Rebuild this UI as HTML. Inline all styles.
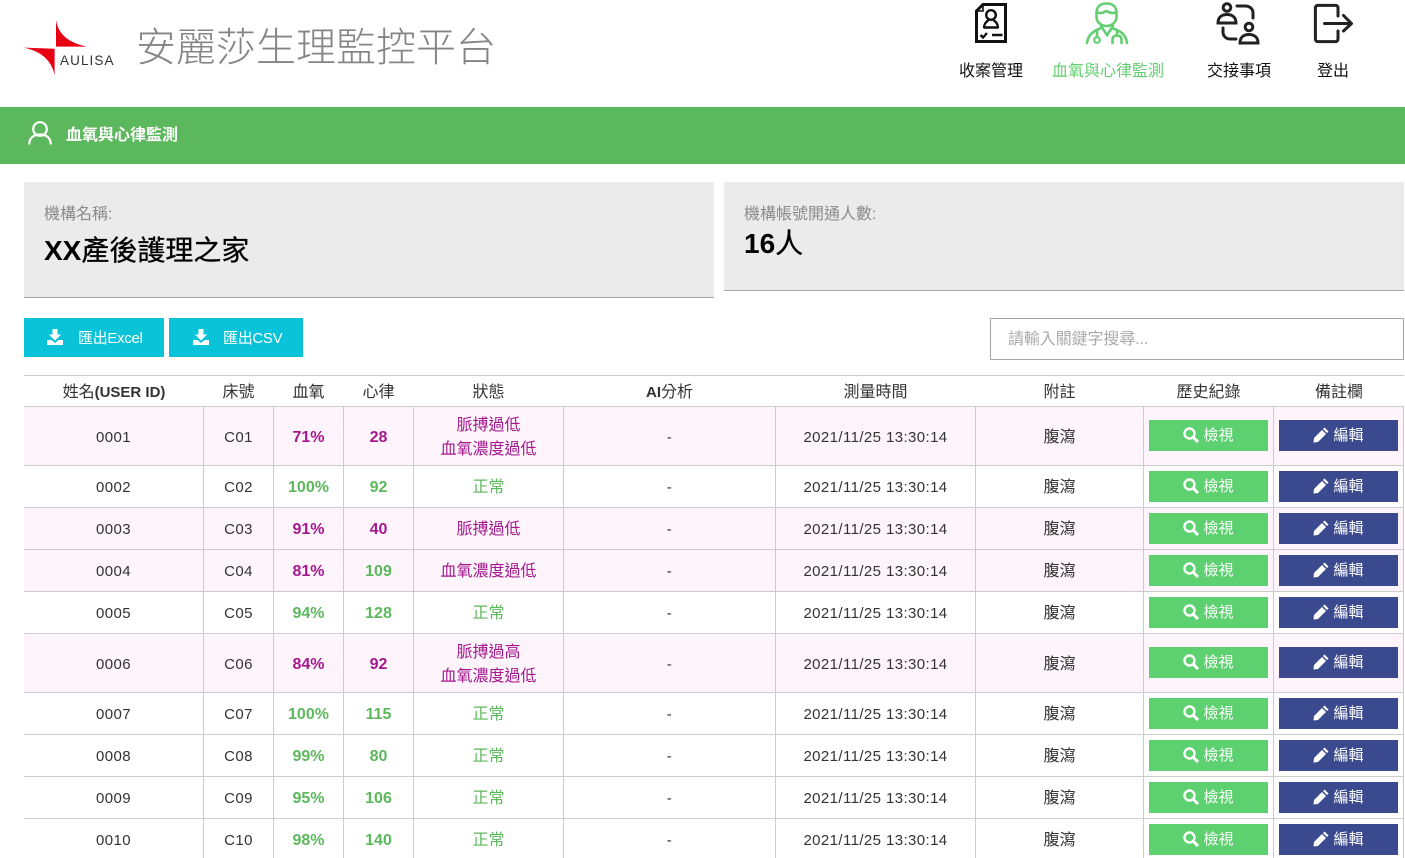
<!DOCTYPE html>
<html lang="zh-Hant"><head><meta charset="utf-8"><title>安麗莎生理監控平台</title>
<style>
*{box-sizing:border-box}
html{margin:0;padding:0;background:#fff;height:858px;overflow:hidden}
body{margin:0;padding:0;background:#fff;width:1405px;height:858px;overflow:hidden;position:relative;font-family:"Liberation Sans","Noto Sans CJK TC",sans-serif;color:#333}
.a{position:absolute;white-space:nowrap}
.nav{position:absolute;top:62px;font-size:16px;line-height:20px;color:#111;white-space:nowrap;text-align:center}
svg{display:block;position:absolute;overflow:visible}
.card{position:absolute;top:182px;background:#ebebeb;border-bottom:1px solid #a5a5a5}
.lab{position:absolute;left:20px;top:22px;font-size:16px;line-height:22px;color:#8a8a8a;white-space:nowrap}
.big{position:absolute;left:20px;font-size:28px;line-height:38px;color:#000;font-weight:700;white-space:nowrap}
.big b{font-weight:400;-webkit-text-stroke:.3px #000}
.exp{position:absolute;top:318px;height:39px;background:#0bc3d9;color:#fff;font-size:15px;line-height:39px;letter-spacing:-.3px}
.exp span{position:absolute;top:1px;white-space:nowrap}
table{position:absolute;left:24px;top:375px;width:1380px;border-collapse:separate;border-spacing:0;table-layout:fixed;font-size:15px;letter-spacing:.4px}
th{height:32px;padding:0 0 2px 1px;border-top:1px solid #ccc;border-bottom:1px solid #ccc;font-weight:400;font-size:16px;letter-spacing:0;color:#333;text-align:center}
th b{font-size:15px}
td{padding:2px 0 0;text-align:center;border-bottom:1px solid #ccc;border-left:1px solid #ccc;color:#333;height:42px;line-height:24px}
td:first-child{border-left:0}
td:last-child{border-right:1px solid #ccc}
tr.p td{background:#fdf5fb}
tr.t td{height:59px;padding-top:4px}
tr td:nth-child(n+9),tr.t td:nth-child(n+9){padding-top:0}
tr.t .btn{margin-top:-1px}
.m{color:#a5178f;font-size:16px;letter-spacing:0}
.g{color:#5cb85c;font-size:16px;letter-spacing:0}
.bm{color:#a5178f;font-weight:700;letter-spacing:0;font-size:16px}
.bg{color:#5cb85c;font-weight:700;letter-spacing:0;font-size:16px}
.c{font-size:16px;letter-spacing:0}
.btn{display:flex;align-items:center;justify-content:center;width:119px;height:31px;margin-left:5px;color:#fff;font-size:15px;letter-spacing:0;line-height:31px}
.v{background:#5dd06f}
.e{background:#3b4a8f}
.btn svg{position:static;margin:-2px 4px 0 0}
</style></head><body>

<svg style="left:0;top:0" width="130" height="90" viewBox="0 0 130 90">
<path d="M56 20Q59 41 87 46.6L56 46.6Z" fill="#e60012"/>
<path d="M24 47.6L54.6 48.8V75Q50 53 24 47.6Z" fill="#e60012"/>
</svg>
<div class="a" style="left:60px;top:53px;font-size:13.500px;line-height:16px;letter-spacing:1.100px;color:#333">AULISA</div>
<div class="a" style="left:136px;top:18px;font-size:40px;line-height:52px;color:#858585;font-weight:300;font-family:'WenQuanYi Zen Hei','Noto Sans CJK TC',sans-serif">安麗莎生理監控平台</div>

<svg style="left:975px;top:3px" width="33" height="41" viewBox="0 0 33 41" fill="none" stroke="#111" stroke-width="3">
<path d="M8 1.500H30.500V38.500H1.500V8Z"/><path d="M8 1.500V8H1.500" stroke-width="1.600"/>
<circle cx="16" cy="12" r="4.800" stroke-width="2.400"/>
<path d="M9 25C9 20 12 18.500 13.500 17M23 25C23 20 20 18.500 18.500 17M8.500 24.500H23.500" stroke-width="2.400"/>
<path d="M5.500 32L8 34.500L12 30M17 32H27.500" stroke-width="2.400"/>
</svg>

<svg style="left:1086px;top:2px" width="42" height="42" viewBox="0 0 42 42" fill="none" stroke="#64cf72" stroke-width="2.600" stroke-linecap="round">
<path d="M10.500 11C10.500 4 15 1.500 20.500 1.500S30.500 4 30.500 11V15C30.500 20 26 24 20.500 24S10.500 20 10.500 15Z"/>
<path d="M10.500 10C14 12 17 11 20.500 9C24 11 27 12 30.500 10"/>
<path d="M15 24L21 33L27 24"/>
<path d="M1 41C2 33 7 29 14 26.500M41 41C40 33 35 29 27 26.500"/>
<path d="M11 28V35"/><circle cx="11" cy="38" r="2.800" stroke-width="2.200"/>
<path d="M31 28V33M26.500 41V38C26.500 35 28 33.500 31 33.500S35.500 35 35.500 38V41"/>
</svg>

<svg style="left:1216px;top:2px" width="45" height="42" viewBox="0 0 45 42" fill="none" stroke="#222" stroke-width="3" stroke-linecap="round">
<circle cx="11" cy="5.500" r="3.800"/>
<path d="M2 21C2 15 6 12.500 11 12.500S20 15 20 21Z"/>
<path d="M21 4H29C34 4 37 7 37 11V16"/>
<circle cx="33" cy="25" r="3.800"/>
<path d="M24 41C24 35 28 32.500 33 32.500S42 35 42 41Z"/>
<path d="M7 26V30C7 34 10 37 14 37H20"/>
</svg>

<svg style="left:1314px;top:4px" width="40" height="40" viewBox="0 0 40 40" fill="none" stroke="#222" stroke-width="3" stroke-linecap="round" stroke-linejoin="round">
<path d="M24 12V4C24 2.400 23 1.400 21.400 1.400H4C2.400 1.400 1.400 2.400 1.400 4V35C1.400 36.600 2.400 37.600 4 37.600H21.400C23 37.600 24 36.600 24 35V27"/>
<path d="M10.500 19.500H37M29.500 11.500L37.500 19.500L29.500 27"/>
</svg>

<div class="nav" style="left:959px;width:64px">收案管理</div>
<div class="nav" style="left:1052px;width:112px;color:#64cf72">血氧與心律監測</div>
<div class="nav" style="left:1207px;width:64px">交接事項</div>
<div class="nav" style="left:1317px;width:32px">登出</div>

<div class="a" style="left:0;top:107px;width:1405px;height:57px;background:#5cb85c"></div>
<svg style="left:28px;top:121px" width="24" height="24" viewBox="0 0 24 24" fill="none" stroke="#fff" stroke-width="2.200">
<circle cx="12" cy="8" r="6.800"/><path d="M1.200 23.500C1.200 17 5.500 13.500 12 13.500S22.800 17 22.800 23.500"/>
</svg>
<div class="a" style="left:66px;top:126px;font-size:16px;line-height:20px;color:#fff;font-weight:700">血氧與心律監測</div>

<div class="card" style="left:24px;width:690px;height:116px">
<div class="lab">機構名稱:</div>
<div class="big" style="top:50px">XX<b>產後護理之家</b></div>
</div>
<div class="card" style="left:724px;width:680px;height:109px">
<div class="lab">機構帳號開通人數:</div>
<div class="big" style="top:43px">16<b>人</b></div>
</div>

<div class="exp" style="left:24px;width:140px">
<svg style="left:23px;top:11px" width="16" height="16" viewBox="0 0 16 16" fill="#fff"><path d="M5.500 0H10.500V5.500H14L8 11.500L2 5.500H5.500ZM0 11H4.500L8 14L11.500 11H16V16H0Z"/></svg>
<span style="left:54px">匯出Excel</span></div>
<div class="exp" style="left:169px;width:134px">
<svg style="left:24px;top:11px" width="16" height="16" viewBox="0 0 16 16" fill="#fff"><path d="M5.500 0H10.500V5.500H14L8 11.500L2 5.500H5.500ZM0 11H4.500L8 14L11.500 11H16V16H0Z"/></svg>
<span style="left:54px">匯出CSV</span></div>

<div class="a" style="left:990px;top:318px;width:414px;height:42px;border:1px solid #a5a5a5;background:#fff;padding-left:17px;font-size:16px;line-height:42px;color:#aaa;letter-spacing:-.1px">請輸入關鍵字搜尋...</div>

<table>
<colgroup><col style="width:179px"><col style="width:70px"><col style="width:70px"><col style="width:70px"><col style="width:150px"><col style="width:212px"><col style="width:200px"><col style="width:168px"><col style="width:130px"><col style="width:131px"></colgroup>
<tr><th>姓名<b>(USER ID)</b></th><th>床號</th><th>血氧</th><th>心律</th><th>狀態</th><th><b>AI</b>分析</th><th>測量時間</th><th>附註</th><th>歷史紀錄</th><th>備註欄</th></tr>

<tr class="p t"><td>0001</td><td>C01</td><td class="bm">71%</td><td class="bm">28</td><td class="m">脈搏過低<br>血氧濃度過低</td><td>-</td><td>2021/11/25 13:30:14</td><td class="c">腹瀉</td><td><div class="btn v"><svg width="16" height="16" viewBox="0 0 16 16" fill="none" stroke="#fff" stroke-width="2.400"><circle cx="6.500" cy="6.500" r="5"/><path d="M10.300 10.300L15 15" stroke-width="3"/></svg>檢視</div></td><td><div class="btn e"><svg width="16" height="16" viewBox="0 0 16 16" fill="#fff"><path d="M11.500 0.500L15.500 4.500L14 6L10 2ZM9 3L13 7L5 15L0.500 15.500L1 11Z"/></svg>編輯</div></td></tr>

<tr><td>0002</td><td>C02</td><td class="bg">100%</td><td class="bg">92</td><td class="g">正常</td><td>-</td><td>2021/11/25 13:30:14</td><td class="c">腹瀉</td><td><div class="btn v"><svg width="16" height="16" viewBox="0 0 16 16" fill="none" stroke="#fff" stroke-width="2.400"><circle cx="6.500" cy="6.500" r="5"/><path d="M10.300 10.300L15 15" stroke-width="3"/></svg>檢視</div></td><td><div class="btn e"><svg width="16" height="16" viewBox="0 0 16 16" fill="#fff"><path d="M11.500 0.500L15.500 4.500L14 6L10 2ZM9 3L13 7L5 15L0.500 15.500L1 11Z"/></svg>編輯</div></td></tr>

<tr class="p"><td>0003</td><td>C03</td><td class="bm">91%</td><td class="bm">40</td><td class="m">脈搏過低</td><td>-</td><td>2021/11/25 13:30:14</td><td class="c">腹瀉</td><td><div class="btn v"><svg width="16" height="16" viewBox="0 0 16 16" fill="none" stroke="#fff" stroke-width="2.400"><circle cx="6.500" cy="6.500" r="5"/><path d="M10.300 10.300L15 15" stroke-width="3"/></svg>檢視</div></td><td><div class="btn e"><svg width="16" height="16" viewBox="0 0 16 16" fill="#fff"><path d="M11.500 0.500L15.500 4.500L14 6L10 2ZM9 3L13 7L5 15L0.500 15.500L1 11Z"/></svg>編輯</div></td></tr>

<tr class="p"><td>0004</td><td>C04</td><td class="bm">81%</td><td class="bg">109</td><td class="m">血氧濃度過低</td><td>-</td><td>2021/11/25 13:30:14</td><td class="c">腹瀉</td><td><div class="btn v"><svg width="16" height="16" viewBox="0 0 16 16" fill="none" stroke="#fff" stroke-width="2.400"><circle cx="6.500" cy="6.500" r="5"/><path d="M10.300 10.300L15 15" stroke-width="3"/></svg>檢視</div></td><td><div class="btn e"><svg width="16" height="16" viewBox="0 0 16 16" fill="#fff"><path d="M11.500 0.500L15.500 4.500L14 6L10 2ZM9 3L13 7L5 15L0.500 15.500L1 11Z"/></svg>編輯</div></td></tr>

<tr><td>0005</td><td>C05</td><td class="bg">94%</td><td class="bg">128</td><td class="g">正常</td><td>-</td><td>2021/11/25 13:30:14</td><td class="c">腹瀉</td><td><div class="btn v"><svg width="16" height="16" viewBox="0 0 16 16" fill="none" stroke="#fff" stroke-width="2.400"><circle cx="6.500" cy="6.500" r="5"/><path d="M10.300 10.300L15 15" stroke-width="3"/></svg>檢視</div></td><td><div class="btn e"><svg width="16" height="16" viewBox="0 0 16 16" fill="#fff"><path d="M11.500 0.500L15.500 4.500L14 6L10 2ZM9 3L13 7L5 15L0.500 15.500L1 11Z"/></svg>編輯</div></td></tr>

<tr class="p t"><td>0006</td><td>C06</td><td class="bm">84%</td><td class="bm">92</td><td class="m">脈搏過高<br>血氧濃度過低</td><td>-</td><td>2021/11/25 13:30:14</td><td class="c">腹瀉</td><td><div class="btn v"><svg width="16" height="16" viewBox="0 0 16 16" fill="none" stroke="#fff" stroke-width="2.400"><circle cx="6.500" cy="6.500" r="5"/><path d="M10.300 10.300L15 15" stroke-width="3"/></svg>檢視</div></td><td><div class="btn e"><svg width="16" height="16" viewBox="0 0 16 16" fill="#fff"><path d="M11.500 0.500L15.500 4.500L14 6L10 2ZM9 3L13 7L5 15L0.500 15.500L1 11Z"/></svg>編輯</div></td></tr>

<tr><td>0007</td><td>C07</td><td class="bg">100%</td><td class="bg">115</td><td class="g">正常</td><td>-</td><td>2021/11/25 13:30:14</td><td class="c">腹瀉</td><td><div class="btn v"><svg width="16" height="16" viewBox="0 0 16 16" fill="none" stroke="#fff" stroke-width="2.400"><circle cx="6.500" cy="6.500" r="5"/><path d="M10.300 10.300L15 15" stroke-width="3"/></svg>檢視</div></td><td><div class="btn e"><svg width="16" height="16" viewBox="0 0 16 16" fill="#fff"><path d="M11.500 0.500L15.500 4.500L14 6L10 2ZM9 3L13 7L5 15L0.500 15.500L1 11Z"/></svg>編輯</div></td></tr>

<tr><td>0008</td><td>C08</td><td class="bg">99%</td><td class="bg">80</td><td class="g">正常</td><td>-</td><td>2021/11/25 13:30:14</td><td class="c">腹瀉</td><td><div class="btn v"><svg width="16" height="16" viewBox="0 0 16 16" fill="none" stroke="#fff" stroke-width="2.400"><circle cx="6.500" cy="6.500" r="5"/><path d="M10.300 10.300L15 15" stroke-width="3"/></svg>檢視</div></td><td><div class="btn e"><svg width="16" height="16" viewBox="0 0 16 16" fill="#fff"><path d="M11.500 0.500L15.500 4.500L14 6L10 2ZM9 3L13 7L5 15L0.500 15.500L1 11Z"/></svg>編輯</div></td></tr>

<tr><td>0009</td><td>C09</td><td class="bg">95%</td><td class="bg">106</td><td class="g">正常</td><td>-</td><td>2021/11/25 13:30:14</td><td class="c">腹瀉</td><td><div class="btn v"><svg width="16" height="16" viewBox="0 0 16 16" fill="none" stroke="#fff" stroke-width="2.400"><circle cx="6.500" cy="6.500" r="5"/><path d="M10.300 10.300L15 15" stroke-width="3"/></svg>檢視</div></td><td><div class="btn e"><svg width="16" height="16" viewBox="0 0 16 16" fill="#fff"><path d="M11.500 0.500L15.500 4.500L14 6L10 2ZM9 3L13 7L5 15L0.500 15.500L1 11Z"/></svg>編輯</div></td></tr>

<tr><td>0010</td><td>C10</td><td class="bg">98%</td><td class="bg">140</td><td class="g">正常</td><td>-</td><td>2021/11/25 13:30:14</td><td class="c">腹瀉</td><td><div class="btn v"><svg width="16" height="16" viewBox="0 0 16 16" fill="none" stroke="#fff" stroke-width="2.400"><circle cx="6.500" cy="6.500" r="5"/><path d="M10.300 10.300L15 15" stroke-width="3"/></svg>檢視</div></td><td><div class="btn e"><svg width="16" height="16" viewBox="0 0 16 16" fill="#fff"><path d="M11.500 0.500L15.500 4.500L14 6L10 2ZM9 3L13 7L5 15L0.500 15.500L1 11Z"/></svg>編輯</div></td></tr>
</table>
</body></html>
